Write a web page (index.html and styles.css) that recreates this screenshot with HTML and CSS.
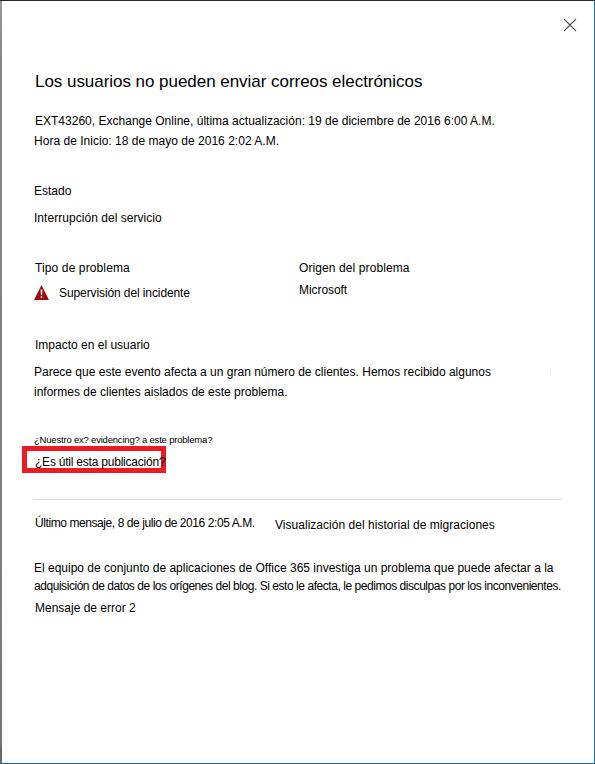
FILE: index.html
```html
<!DOCTYPE html>
<html lang="es">
<head>
<meta charset="utf-8">
<title>Los usuarios no pueden enviar correos electrónicos</title>
<link rel="stylesheet" href="styles.css">
</head>
<body>
<main class="panel">
  <header class="bar">
    <svg class="close" viewBox="0 0 14 14"><path d="M1 1 13 13M13 1 1 13"/></svg>
  </header>
  <h1 class="title">Los usuarios no pueden enviar correos electrónicos</h1>
  <section class="meta">
    <p class="meta-id">EXT43260, Exchange Online, última actualización: 19 de diciembre de 2016 6:00 A.M.</p>
    <p class="meta-start">Hora de Inicio: 18 de mayo de 2016 2:02 A.M.</p>
  </section>
  <section class="status">
    <p>Estado</p>
    <p class="value">Interrupción del servicio</p>
  </section>
  <section class="columns">
    <div>
      <p class="kind">Tipo de problema</p>
      <div class="incident">
        <svg class="warn" viewBox="0 0 15 15"><path class="tri" d="M7.5 0 15 15H0Z"/><path class="mark" d="M6.6 4.5h1.8l-.3 5.5h-1.2zM6.7 11.2h1.6v1.6H6.7z"/></svg>
        <p>Supervisión del incidente</p>
      </div>
    </div>
    <div>
      <p class="origin">Origen del problema</p>
      <p class="origin-value">Microsoft</p>
    </div>
  </section>
  <section class="impact">
    <p class="nudge">Impacto en el usuario</p>
    <div class="impact-text">
      <p>Parece que este evento afecta a un gran número de clientes. Hemos recibido algunos</p>
      <i class="tick"></i>
    </div>
    <p>informes de clientes aislados de este problema.</p>
  </section>
  <p class="question">¿Nuestro ex? evidencing? a este problema?</p>
  <div class="callout"><p>¿Es útil esta publicación?</p></div>
  <section class="history">
    <p class="last">Último mensaje, 8 de julio de 2016 2:05 A.M.</p>
    <p class="view">Visualización del historial de migraciones</p>
  </section>
  <section class="message">
    <p>El equipo de conjunto de aplicaciones de Office 365 investiga un problema que puede afectar a la</p>
    <p class="tight">adquisición de datos de los orígenes del blog. Si esto le afecta, le pedimos disculpas por los inconvenientes.</p>
    <p class="error">Mensaje de error 2</p>
  </section>
</main>
</body>
</html>
```
FILE: styles.css
```css
* { box-sizing: border-box; }
body { margin: 0; background: #fff; color: #000; font: 12px/20px "Liberation Sans", Arial, sans-serif; }
p, h1 { margin: 0; white-space: nowrap; }
.panel {
  height: 764px;
  padding: 0 32px 0 34px;
  border-style: solid;
  border-width: 1px 1px 1px 0;
  border-color: #2b262b #1d6ba3 #1d6ba3;
  background: linear-gradient(#999, #858585 60px, #808080 500px, #777 740px, #686868 750px) left top / 2px 100% no-repeat #fff;
}
.bar { display: flex; justify-content: flex-end; height: 69px; padding-top: 17px; margin-right: -15px; }
.close { width: 14px; height: 14px; fill: none; stroke: #555; stroke-width: 1.1; }
.title { padding-left: 1px; font-size: 17px; font-weight: 400; line-height: 24px; letter-spacing: -0.04px; }
.meta { margin-top: 17px; }
.meta-id { padding-left: 1px; letter-spacing: 0.01px; }
.meta-start { letter-spacing: 0.02px; }
.status { margin-top: 30px; }
.value { margin-top: 7px; letter-spacing: 0.04px; }
.columns { display: grid; grid-template-columns: 265px 1fr; margin-top: 30px; }
.nudge, .kind { padding-left: 1px; }
.kind { letter-spacing: 0.12px; }
.incident { display: flex; align-items: center; gap: 10px; margin-top: 5px; letter-spacing: -0.1px; }
.warn { width: 15px; height: 15px; margin-bottom: 2px; }
.tri { fill: #a00c10; }
.mark { fill: #fff; }
.origin { letter-spacing: 0.1px; }
.origin-value { margin-top: 2px; letter-spacing: -0.06px; }
.impact { margin-top: 32px; }
.impact-text { display: flex; align-items: center; justify-content: space-between; margin-top: 7px; padding-right: 11px; }
.tick { width: 1px; height: 6px; background: #e8e8e8; }
.question { margin-top: 28px; line-height: 19px; font-size: 9.5px; letter-spacing: -0.2px; }
.callout { width: 144px; height: 27px; margin: -3px 0 0 -12px; border: 5px solid #ed1c24; padding: 1px 0 0 8px; letter-spacing: -0.22px; }
.history { display: flex; align-items: flex-start; width: 528px; margin-top: 26px; padding-top: 13px; border-top: 1px solid #ddd; }
.last { width: 241px; padding-left: 1px; letter-spacing: -0.42px; }
.view { margin-top: 2px; letter-spacing: 0.03px; }
.message { margin-top: 24px; line-height: 18px; }
.tight { letter-spacing: -0.45px; }
.error { margin-top: 4px; padding-left: 1px; }
```
